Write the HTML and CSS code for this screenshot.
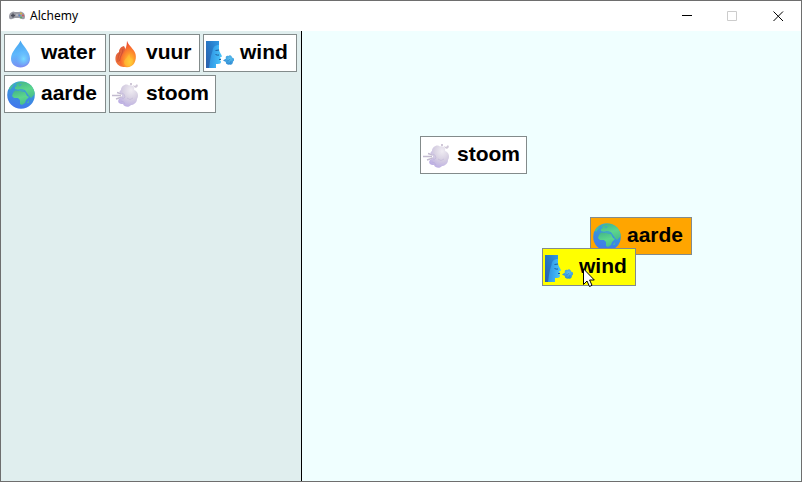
FILE: index.html
```
<!DOCTYPE html>
<html lang="nl">
<head>
<meta charset="utf-8">
<title>Alchemy</title>
<link rel="stylesheet" href="styles.css">
</head>
<body>
<svg class="defs" aria-hidden="true">
  <defs>
    <linearGradient id="g-water" x1="0.2" y1="0" x2="0.4" y2="1"><stop offset="0" stop-color="#43a4ee"/><stop offset="0.5" stop-color="#5fb8fc"/><stop offset="1" stop-color="#7b8ef2"/></linearGradient>
    <radialGradient id="g-shine" cx="0.6" cy="0.6" r="0.5"><stop offset="0" stop-color="#78dcff"/><stop offset="1" stop-color="#64bfff" stop-opacity="0"/></radialGradient>
    <radialGradient id="g-fire" cx="0.62" cy="0.8" r="0.8"><stop offset="0" stop-color="#ffce38"/><stop offset="0.35" stop-color="#ffa02e"/><stop offset="0.7" stop-color="#f9692f"/><stop offset="1" stop-color="#e8432e"/></radialGradient>
    <linearGradient id="g-ember" x1="0" y1="0" x2="0.3" y2="1"><stop offset="0" stop-color="#d9583c"/><stop offset="1" stop-color="#f4783a"/></linearGradient>
    <linearGradient id="g-face" x1="0" y1="0.4" x2="1" y2="0.5"><stop offset="0" stop-color="#2a86d3"/><stop offset="0.5" stop-color="#38a5ec"/><stop offset="1" stop-color="#4bc6fb"/></linearGradient>
    <linearGradient id="g-hair" x1="1" y1="0" x2="0" y2="0.8"><stop offset="0" stop-color="#3099e4"/><stop offset="0.5" stop-color="#277bc8"/><stop offset="1" stop-color="#2a62ae"/></linearGradient>
    <radialGradient id="g-puff" cx="0.6" cy="0.35" r="0.6"><stop offset="0" stop-color="#5ac0ee"/><stop offset="1" stop-color="#328fd6"/></radialGradient>
    <linearGradient id="g-sea" x1="0.7" y1="0" x2="0.4" y2="1"><stop offset="0" stop-color="#3fb6c0"/><stop offset="0.45" stop-color="#3a92dc"/><stop offset="1" stop-color="#4176ee"/></linearGradient>
    <linearGradient id="g-land" x1="0.3" y1="0" x2="0.6" y2="1"><stop offset="0" stop-color="#46b98a"/><stop offset="0.5" stop-color="#5cd68c"/><stop offset="1" stop-color="#48bf8c"/></linearGradient>
    <radialGradient id="g-steam" cx="0.65" cy="0.25" r="0.8"><stop offset="0" stop-color="#f0edf3"/><stop offset="0.5" stop-color="#d7d0e2"/><stop offset="1" stop-color="#bcaee4"/></radialGradient>
  </defs>
  <symbol id="i-water" viewBox="0 0 28 28">
    <path d="M13.500 .5C12 5 4 11.500 4 18.500C4 24 8 27.500 13.500 27.500S23 24 23 18.500C23 11.500 15 5 13.500 .5Z" fill="url(#g-water)"/>
    <ellipse cx="15" cy="17" rx="8" ry="9" fill="url(#g-shine)"/>
  </symbol>
  <symbol id="i-fire" viewBox="0 0 28 28">
    <path d="M12 6C8 7 7 10 7 12C3 14 3 19 4 22C6 26 9 27 13 27L16 14Z" fill="url(#g-ember)"/>
    <path d="M15 .8C16 5 22 9 23.500 14C25 20 22 27.300 15 27.300C9 27.300 7 23 8 19C9 15 15 11 15 .8Z" fill="url(#g-fire)"/>
    <path d="M11 9C11 13 8 16 7.500 21M8 12C7 15 5.500 18 6 22" stroke="#c2452f" stroke-width="1" fill="none" opacity=".65"/>
    <path d="M17 13C17 17 12 19 12 22C12 25 14 26.500 17 26C21 25 22 21 20 18C19 20 18 17 17 13Z" fill="#ffcd38" opacity=".45"/>
  </symbol>
  <symbol id="i-wind" viewBox="0 -1 28 28">
    <path d="M0 0H13V8C13.500 12 16 14 16 15.500L14 16.500L15 18L14 19L15 20.500C15 23 13 23 10 23V27H0Z" fill="url(#g-face)"/>
    <path d="M0 0H13V4C9 4 7 6 6.500 10L5 15L4 20L3 27H0Z" fill="url(#g-hair)"/>
    <path d="M9.500 9.500L13 9M9.500 13.500Q11.500 14.500 13 14M13 18.500H15" stroke="#1d5c9f" stroke-width="1" fill="none"/>
    <path d="M17 19.500L20 17.500C19 15.500 21 14 22.500 15C24 13 26 15 26 16.500C28.500 17 29 19 27 20.500C27 23 25 24.500 23.500 23.500C22 24 19 23 20 21Z" fill="url(#g-puff)"/>
    <path d="M21 20Q23 20 24 18M23 23Q25 22 25 20" stroke="#2b82cc" stroke-width="1" fill="none" opacity=".6"/>
  </symbol>
  <symbol id="i-earth" viewBox="0 0 28 28">
    <circle cx="14" cy="14" r="13.800" fill="url(#g-sea)"/>
    <path d="M9 3L13 1H18L23 3.500C25 5 27.500 9 27.700 13L26 15L24 17L22 15L20 12L18 9L14 8L12 9L8 8L8 6L10 5Z" fill="url(#g-land)"/>
    <path d="M6 12L8 9.500L13 10L18 11L20 15L22 16L19 19L18 22L15 24L13 23L13 19L11 17L7 17L5 15Z" fill="url(#g-land)"/>
    <path d="M2 7L5 4L7 3L5 6L3 9ZM20 22L22 19L21.500 22Z" fill="#4bc68d"/>
    <path d="M11 8.500L14 8L18 9.500L16 10.500L12 9.800ZM11 3.500L15 3L13 5.500Z" fill="#41a8c4"/>
  </symbol>
  <symbol id="i-steam" viewBox="0 0 28 28">
    <path d="M-1 14.500H9M5 11.500L10 13M4 18L10 16" stroke="#c3bbd0" stroke-width="1.500" fill="none"/>
    <path d="M9 9C9 5 14 2 17 4.500C21 3 23 7 22 9C26 10 27 15 25 18C25 22 21 24 19 24C17 27 12 26 11 23C7 23 5 21 7 18L10 16V13C7 12 7 10 9 9Z" fill="url(#g-steam)"/>
    <path d="M10 12Q13 13 13 16Q12 18 10 17M9 20Q12 20 13 23M15 17Q18 20 21 17" stroke="#aa9bce" stroke-width="1" fill="none" opacity=".3"/>
    <path d="M21 4L23 5L25 3L26 5L24 7L22 6ZM18 2L20 2L20 4L18 4Z" fill="#d0c8d8"/>
  </symbol>
</svg>

<div class="window">
  <header class="titlebar">
    <svg class="app-icon" viewBox="0 0 16 10" aria-hidden="true">
      <path d="M3 1Q4 0 6 1H10Q12 0 13 1Q16 2 16 6Q16 9 13 8L10 7H6L3 8Q0 9 0 6Q0 2 3 1Z" fill="#9a9ba4"/>
      <path d="M2 4.500H6M4 2.500V6.500" stroke="#4b4d59" stroke-width="1.400"/>
      <path d="M7 4H9" stroke="#d4d4db" stroke-width="1"/>
      <circle cx="12" cy="2.500" r="1" fill="#d8b342"/><circle cx="14" cy="4.500" r="1" fill="#d95757"/><circle cx="12" cy="6.500" r="1" fill="#5da65f"/><circle cx="10.500" cy="4.500" r="1" fill="#5383c9"/>
    </svg>
    <h1 class="title">Alchemy</h1>
    <div class="controls">
      <button class="control" aria-label="Minimize"><svg viewBox="0 0 11 11"><path d="M1 4.500H11"/></svg></button>
      <button class="control" aria-label="Maximize" disabled><svg viewBox="0 0 11 11"><path d="M.5 .5H9.500V9.500H.5Z"/></svg></button>
      <button class="control" aria-label="Close"><svg viewBox="0 0 11 11"><path d="M.5 .5L10 10M10 .5L.5 10"/></svg></button>
    </div>
  </header>
  <main class="game">
    <aside class="palette">
      <button class="card water"><svg class="icon"><use href="#i-water"/></svg><span class="label">water</span></button>
      <button class="card fire"><svg class="icon"><use href="#i-fire"/></svg><span class="label">vuur</span></button>
      <button class="card wind"><svg class="icon"><use href="#i-wind"/></svg><span class="label">wind</span></button>
      <button class="card earth"><svg class="icon"><use href="#i-earth"/></svg><span class="label">aarde</span></button>
      <button class="card steam"><svg class="icon"><use href="#i-steam"/></svg><span class="label">stoom</span></button>
    </aside>
    <section class="board">
      <button class="card steam placed spot-steam"><svg class="icon"><use href="#i-steam"/></svg><span class="label">stoom</span></button>
      <button class="card earth placed spot-earth target"><svg class="icon"><use href="#i-earth"/></svg><span class="label">aarde</span></button>
      <button class="card wind placed spot-wind dragged"><svg class="icon"><use href="#i-wind"/></svg><span class="label">wind</span></button>
      <svg class="pointer" viewBox="0 0 12 19" aria-hidden="true"><path d="M.5 .8V16.500L4 13L6.500 18.500L9 17.300L6.600 12H11.300Z" fill="#fff" stroke="#000" stroke-width="1"/></svg>
    </section>
  </main>
</div>
</body>
</html>
```
FILE: styles.css
```
* {
  box-sizing: border-box;
}

body {
  margin: 0;
}

.defs {
  position: absolute;
  width: 0;
  height: 0;
}

.window {
  display: flex;
  flex-direction: column;
  min-height: 100vh;
  border: 1px solid #6e6e6e;
}

.titlebar {
  display: flex;
  align-items: center;
  height: 30px;
  padding-left: 8px;
  background: #fff;
}

.app-icon {
  width: 16px;
  height: 10px;
}

.title {
  margin: 0 auto 0 5px;
  font: 400 12px/16px "Noto Sans", sans-serif;
  color: #000;
}

.controls {
  display: flex;
}

.control {
  display: flex;
  align-items: center;
  justify-content: center;
  width: 46px;
  height: 30px;
  padding: 0;
  border: 0;
  background: none;
}

.control svg {
  width: 11px;
  height: 11px;
  fill: none;
  stroke: #000;
}

.control:disabled svg {
  stroke: #ccc;
}

.game {
  display: flex;
  flex: 1;
}

.palette {
  display: flex;
  flex-wrap: wrap;
  align-content: flex-start;
  gap: 3px;
  width: 301px;
  padding: 3px;
  border-right: 1px solid #000;
  background: #e0eeee;
}

.board {
  position: relative;
  flex: 1;
  background: #f0ffff;
}

.card {
  display: flex;
  align-items: flex-end;
  gap: 6px;
  height: 38px;
  padding: 0 0 3px 2px;
  border: 1px solid #838b8b;
  background: #fff;
  color: #000;
  font: 700 21px/24px "Liberation Sans", Arial, sans-serif;
  text-align: left;
}

.icon {
  flex: none;
  width: 28px;
  height: 28px;
}

.label {
  padding-bottom: 4px;
}

.water,
.earth {
  width: 102px;
}

.fire {
  width: 91px;
}

.wind {
  width: 94px;
}

.steam {
  width: 107px;
}

.placed {
  position: absolute;
}

.target {
  background: #ffa500;
}

.dragged {
  background: #ff0;
}

.spot-steam {
  left: 118px;
  top: 105px;
}

.spot-earth {
  left: 288px;
  top: 186px;
}

.spot-wind {
  left: 240px;
  top: 217px;
}

.pointer {
  position: absolute;
  left: 281px;
  top: 237px;
  width: 12px;
  height: 19px;
}
```
